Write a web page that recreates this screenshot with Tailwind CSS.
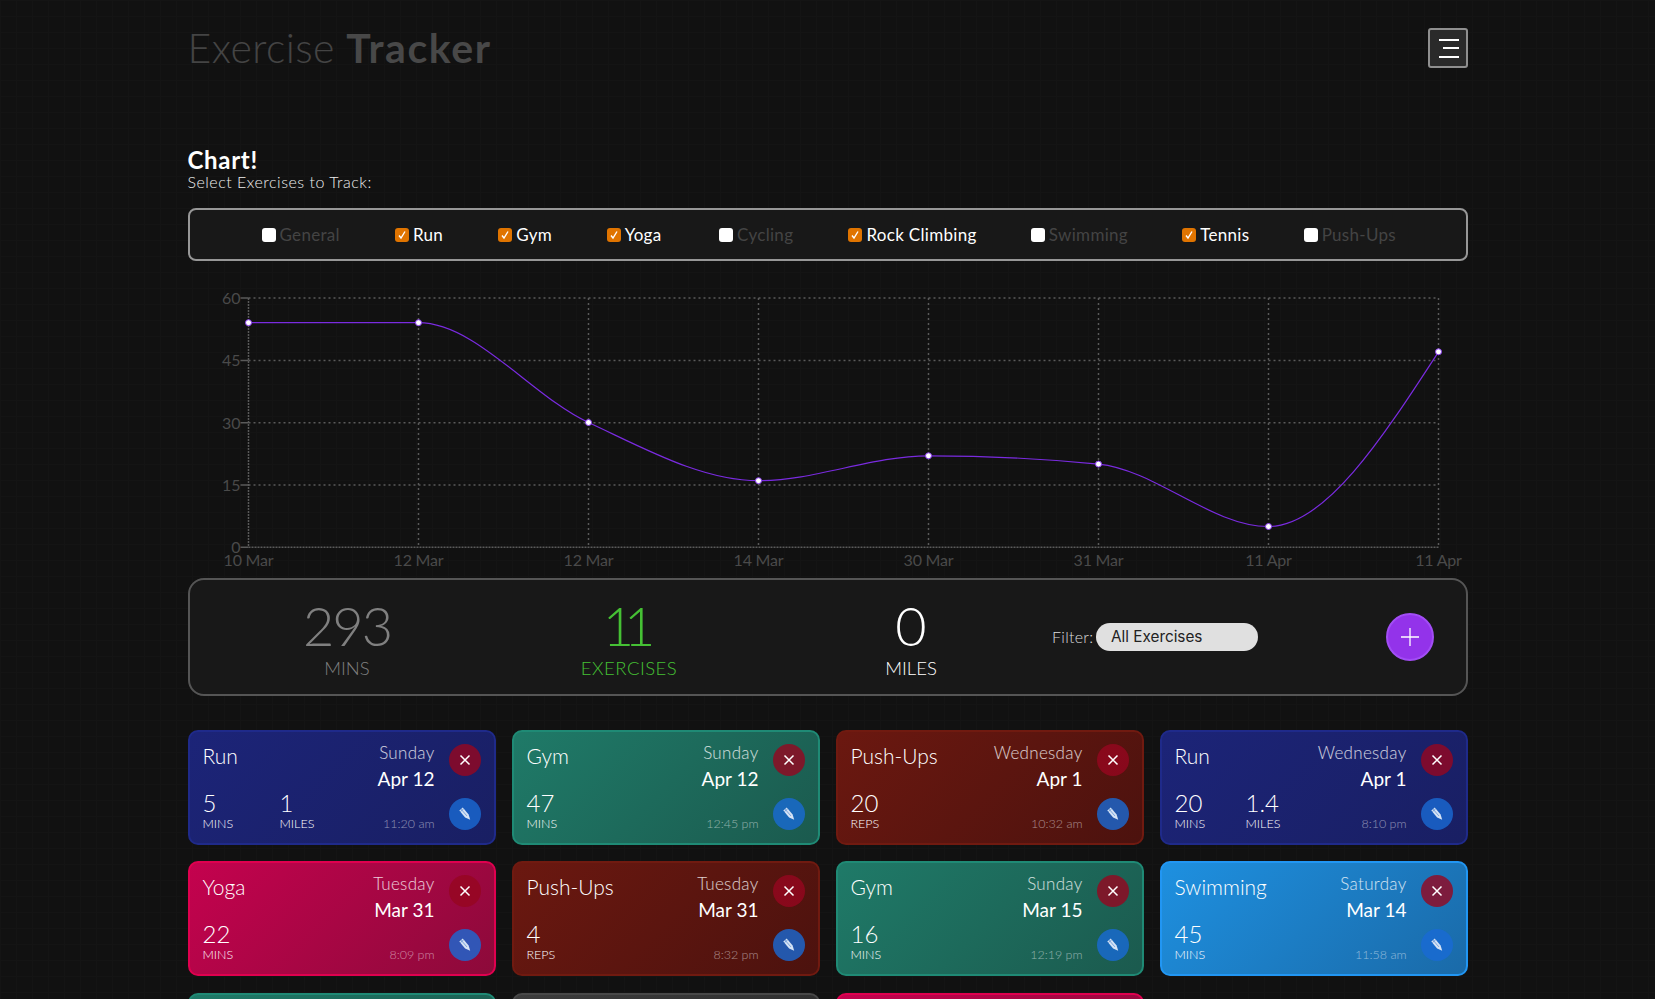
<!DOCTYPE html>
<html lang="en">
<head>
<meta charset="utf-8">
<title>Exercise Tracker</title>
<script src="https://cdn.jsdelivr.net/npm/@tailwindcss/browser@4"></script>
</head>
<body class="h-screen overflow-hidden bg-[#111111] bg-[linear-gradient(#141414_1px,transparent_1px),linear-gradient(90deg,#141414_1px,transparent_1px)] bg-[size:16px_16px] font-['Lato',sans-serif] text-white">
<div class="mx-auto w-[1280px]">

  <header class="flex h-[68px] items-end justify-between">
    <h1 class="text-[41px] leading-[40px] font-light tracking-[0.4px] text-[#444444]">Exercise <span class="font-bold tracking-[1.6px] text-[#484848]">Tracker</span></h1>
    <button class="flex h-10 w-10 flex-col items-end justify-center gap-[6.5px] rounded-[3px] border-2 border-[#8f8f8f] bg-[#2a2a2a] pr-[7px]">
      <span class="h-[2px] w-5 bg-white"></span>
      <span class="h-[2px] w-4 bg-white"></span>
      <span class="h-[2px] w-5 bg-white"></span>
    </button>
  </header>

  <h2 class="mt-[80px] text-[24px] leading-6 font-bold tracking-[0.7px]">Chart!</h2>
  <p class="text-[16px] leading-5 font-light tracking-[0.5px] text-[#eeeeee]">Select Exercises to Track:</p>

  <div class="mt-[16px] flex h-[53px] items-center gap-[56.4px] rounded-[8px] border-2 border-[#979797] bg-[#181818] pl-[72px] text-[17px] tracking-[0.3px] whitespace-nowrap">
    <label class="flex w-[77px] items-center gap-[4px] text-[#444444]"><span class="h-[14px] w-[14px] shrink-0 rounded-[3px] bg-white"></span>General</label>
    <label class="flex w-[47px] items-center gap-[4px]"><span class="flex h-[14px] w-[14px] shrink-0 items-center justify-center rounded-[3px] bg-[#e07400]"><svg width="10" height="10" viewBox="0 0 10 10" fill="none" stroke="#fff" stroke-width="1.4"><path d="M2 5.5 4 8 8 1.5"/></svg></span>Run</label>
    <label class="flex w-[52px] items-center gap-[4px]"><span class="flex h-[14px] w-[14px] shrink-0 items-center justify-center rounded-[3px] bg-[#e07400]"><svg width="10" height="10" viewBox="0 0 10 10" fill="none" stroke="#fff" stroke-width="1.4"><path d="M2 5.5 4 8 8 1.5"/></svg></span>Gym</label>
    <label class="flex w-[56px] items-center gap-[4px]"><span class="flex h-[14px] w-[14px] shrink-0 items-center justify-center rounded-[3px] bg-[#e07400]"><svg width="10" height="10" viewBox="0 0 10 10" fill="none" stroke="#fff" stroke-width="1.4"><path d="M2 5.5 4 8 8 1.5"/></svg></span>Yoga</label>
    <label class="flex w-[73px] items-center gap-[4px] text-[#444444]"><span class="h-[14px] w-[14px] shrink-0 rounded-[3px] bg-white"></span>Cycling</label>
    <label class="flex w-[126px] items-center gap-[4px]"><span class="flex h-[14px] w-[14px] shrink-0 items-center justify-center rounded-[3px] bg-[#e07400]"><svg width="10" height="10" viewBox="0 0 10 10" fill="none" stroke="#fff" stroke-width="1.4"><path d="M2 5.5 4 8 8 1.5"/></svg></span>Rock Climbing</label>
    <label class="flex w-[95px] items-center gap-[4px] text-[#444444]"><span class="h-[14px] w-[14px] shrink-0 rounded-[3px] bg-white"></span>Swimming</label>
    <label class="flex w-[65px] items-center gap-[4px]"><span class="flex h-[14px] w-[14px] shrink-0 items-center justify-center rounded-[3px] bg-[#e07400]"><svg width="10" height="10" viewBox="0 0 10 10" fill="none" stroke="#fff" stroke-width="1.4"><path d="M2 5.5 4 8 8 1.5"/></svg></span>Tennis</label>
    <label class="flex w-[88px] items-center gap-[4px] text-[#444444]"><span class="h-[14px] w-[14px] shrink-0 rounded-[3px] bg-white"></span>Push-Ups</label>
  </div>

  <svg class="block" width="1280" height="317" viewBox="187.5 261 1280 317">
    <g stroke="#5a5a5a" stroke-width="1.5" stroke-dasharray="2 3" fill="none">
      <path d="M248 298H1438M248 360.4H1438M248 422.7H1438M248 485H1438"/>
      <path d="M418 298V547M588 298V547M758 298V547M928 298V547M1098 298V547M1268 298V547M1438 298V547"/>
    </g>
    <g stroke="#5a5a5a" stroke-width="1.5" stroke-dasharray="2 1" fill="none">
      <path d="M248 298V547M248 547.3H1438"/>
      <path d="M240 298H248M240 360.4H248M240 422.7H248M240 485H248M240 547.3H248" stroke-dasharray="none"/>
    </g>
    <g fill="#4a4a4a" font-size="16" text-anchor="end" font-family="Lato, sans-serif">
      <text x="240" y="304">60</text>
      <text x="240" y="366">45</text>
      <text x="240" y="429">30</text>
      <text x="240" y="491">15</text>
      <text x="240" y="553">0</text>
    </g>
    <g fill="#4a4a4a" font-size="16" letter-spacing="-0.2" text-anchor="middle" font-family="Lato, sans-serif">
      <text x="248" y="566">10 Mar</text>
      <text x="418" y="566">12 Mar</text>
      <text x="588" y="566">12 Mar</text>
      <text x="758" y="566">14 Mar</text>
      <text x="928" y="566">30 Mar</text>
      <text x="1098" y="566">31 Mar</text>
      <text x="1268" y="566">11 Apr</text>
      <text x="1438" y="566">11 Apr</text>
    </g>
    <path fill="none" stroke="#7a2be0" stroke-width="1.2" d="M248 322.7C304.7 322.7 361.3 322.7 418 322.7C474.7 322.7 531.3 396.2 588 422.5C644.7 448.8 701.3 480.7 758 480.7C814.7 480.7 871.3 455.8 928 455.8C984.7 455.8 1041.3 458.6 1098 464.1C1154.7 469.6 1211.3 526.5 1268 526.5C1324.7 526.5 1381.3 439.1 1438 351.8"/>
    <g fill="#fff" stroke="#8a3cf0" stroke-width="1">
      <circle cx="248" cy="322.7" r="3"/>
      <circle cx="418" cy="322.7" r="3"/>
      <circle cx="588" cy="422.5" r="3"/>
      <circle cx="758" cy="480.7" r="3"/>
      <circle cx="928" cy="455.8" r="3"/>
      <circle cx="1098" cy="464.1" r="3"/>
      <circle cx="1268" cy="526.5" r="3"/>
      <circle cx="1438" cy="351.8" r="3"/>
    </g>
  </svg>

  <section class="flex h-[118px] items-center rounded-[16px] border-2 border-[#555555] bg-[#181818] pr-[32px] pl-[16.5px]">
    <div class="w-[282px] pt-[4px] text-center text-[#808080]">
      <div class="text-[54px] leading-[56px] font-light tracking-[-2px]">293</div>
      <div class="mt-[2px] text-[18.5px] leading-6 font-light">MINS</div>
    </div>
    <div class="w-[282px] pt-[4px] text-center text-[#45c034]">
      <div class="pr-[10px] text-[54px] leading-[56px] font-light tracking-[-10px]">11</div>
      <div class="mt-[2px] text-[18.5px] leading-6 font-light tracking-[0.5px]">EXERCISES</div>
    </div>
    <div class="w-[282px] pt-[4px] text-center text-white">
      <div class="text-[54px] leading-[56px] font-light">0</div>
      <div class="mt-[2px] text-[18.5px] leading-6 font-light">MILES</div>
    </div>
    <div class="flex items-center gap-[4px]">
      <span class="w-[40px] text-[16px] font-light tracking-[0.3px] whitespace-nowrap text-[#dddddd]">Filter:</span>
      <div class="flex h-[28px] w-[162px] items-center rounded-full bg-[#e0e0e0] pl-[15px] font-['Inter',sans-serif] text-[15.3px] text-[#222222]">All Exercises</div>
    </div>
    <button class="ml-auto flex h-12 w-12 items-center justify-center rounded-full border-2 border-[#a24df5] bg-[#9333ea]">
      <svg width="20" height="20" viewBox="0 0 20 20" stroke="#fff" stroke-width="1.3"><path d="M1 10H19M10 1V19"/></svg>
    </button>
  </section>

  <div class="mt-[33.5px] grid grid-cols-4 gap-x-4 gap-y-[16.5px]">

    <article class="flex h-[115px] rounded-[10px] border-2 border-[#1f2a8a] bg-[linear-gradient(135deg,#1c2478,#191f63)] pr-[13px] pl-[13px]">
      <div class="flex min-w-0 flex-1 flex-col pt-[11px]">
        <div class="flex justify-between">
          <h3 class="pt-[1px] text-[21px] leading-6 font-light">Run</h3>
          <div class="text-right"><div class="text-[17px] leading-5 font-light tracking-[0.3px] text-white/80">Sunday</div><div class="mt-[4px] text-[19px] leading-6">Apr 12</div></div>
        </div>
        <div class="flex items-end justify-between">
          <div class="flex">
            <div class="w-[77px]"><div class="text-[24px] leading-6 font-light">5</div><div class="mt-[1px] text-[12.5px] leading-4 font-light">MINS</div></div>
            <div><div class="text-[24px] leading-6 font-light">1</div><div class="mt-[1px] text-[12.5px] leading-4 font-light">MILES</div></div>
          </div>
          <div class="text-[12.5px] leading-4 font-light text-white/50">11:20 am</div>
        </div>
      </div>
      <div class="ml-[14px] flex w-8 flex-col gap-[22px] pt-[12px]">
        <button class="flex h-8 w-8 items-center justify-center rounded-full bg-[#96061f]/80"><svg width="12" height="12" viewBox="0 0 12 12" stroke="#fff" stroke-width="1.5"><path d="M1.5 1.5 10.5 10.5M10.5 1.5 1.5 10.5"/></svg></button>
        <button class="flex h-8 w-8 items-center justify-center rounded-full bg-[#196ad4]/80"><svg width="12" height="14" viewBox="0 0 12 14"><path fill="#d5e3f5" d="M.3 3.6 3.8.6 9.6 7.4 11.2 12.8 6.1 10.4Z"/><path fill="none" stroke="#3f78c8" stroke-width=".6" d="M2 2.1 7.9 8.9M1.3 4.7 4.8 1.7"/></svg></button>
      </div>
    </article>

    <article class="flex h-[115px] rounded-[10px] border-2 border-[#1f8a75] bg-[linear-gradient(135deg,#1f7a68,#1b5a4e)] pr-[13px] pl-[13px]">
      <div class="flex min-w-0 flex-1 flex-col pt-[11px]">
        <div class="flex justify-between">
          <h3 class="pt-[1px] text-[21px] leading-6 font-light">Gym</h3>
          <div class="text-right"><div class="text-[17px] leading-5 font-light tracking-[0.3px] text-white/80">Sunday</div><div class="mt-[4px] text-[19px] leading-6">Apr 12</div></div>
        </div>
        <div class="flex items-end justify-between">
          <div class="flex"><div><div class="text-[24px] leading-6 font-light">47</div><div class="mt-[1px] text-[12.5px] leading-4 font-light">MINS</div></div></div>
          <div class="text-[12.5px] leading-4 font-light text-white/50">12:45 pm</div>
        </div>
      </div>
      <div class="ml-[14px] flex w-8 flex-col gap-[22px] pt-[12px]">
        <button class="flex h-8 w-8 items-center justify-center rounded-full bg-[#96061f]/80"><svg width="12" height="12" viewBox="0 0 12 12" stroke="#fff" stroke-width="1.5"><path d="M1.5 1.5 10.5 10.5M10.5 1.5 1.5 10.5"/></svg></button>
        <button class="flex h-8 w-8 items-center justify-center rounded-full bg-[#196ad4]/80"><svg width="12" height="14" viewBox="0 0 12 14"><path fill="#d5e3f5" d="M.3 3.6 3.8.6 9.6 7.4 11.2 12.8 6.1 10.4Z"/><path fill="none" stroke="#3f78c8" stroke-width=".6" d="M2 2.1 7.9 8.9M1.3 4.7 4.8 1.7"/></svg></button>
      </div>
    </article>

    <article class="flex h-[115px] rounded-[10px] border-2 border-[#701a10] bg-[linear-gradient(135deg,#6b1810,#4c120e)] pr-[13px] pl-[13px]">
      <div class="flex min-w-0 flex-1 flex-col pt-[11px]">
        <div class="flex justify-between">
          <h3 class="pt-[1px] text-[21px] leading-6 font-light">Push-Ups</h3>
          <div class="text-right"><div class="text-[17px] leading-5 font-light tracking-[0.3px] text-white/80">Wednesday</div><div class="mt-[4px] text-[19px] leading-6">Apr 1</div></div>
        </div>
        <div class="flex items-end justify-between">
          <div class="flex"><div><div class="text-[24px] leading-6 font-light">20</div><div class="mt-[1px] text-[12.5px] leading-4 font-light">REPS</div></div></div>
          <div class="text-[12.5px] leading-4 font-light text-white/50">10:32 am</div>
        </div>
      </div>
      <div class="ml-[14px] flex w-8 flex-col gap-[22px] pt-[12px]">
        <button class="flex h-8 w-8 items-center justify-center rounded-full bg-[#96061f]/80"><svg width="12" height="12" viewBox="0 0 12 12" stroke="#fff" stroke-width="1.5"><path d="M1.5 1.5 10.5 10.5M10.5 1.5 1.5 10.5"/></svg></button>
        <button class="flex h-8 w-8 items-center justify-center rounded-full bg-[#196ad4]/80"><svg width="12" height="14" viewBox="0 0 12 14"><path fill="#d5e3f5" d="M.3 3.6 3.8.6 9.6 7.4 11.2 12.8 6.1 10.4Z"/><path fill="none" stroke="#3f78c8" stroke-width=".6" d="M2 2.1 7.9 8.9M1.3 4.7 4.8 1.7"/></svg></button>
      </div>
    </article>

    <article class="flex h-[115px] rounded-[10px] border-2 border-[#1f2a8a] bg-[linear-gradient(135deg,#1c2478,#191f63)] pr-[13px] pl-[13px]">
      <div class="flex min-w-0 flex-1 flex-col pt-[11px]">
        <div class="flex justify-between">
          <h3 class="pt-[1px] text-[21px] leading-6 font-light">Run</h3>
          <div class="text-right"><div class="text-[17px] leading-5 font-light tracking-[0.3px] text-white/80">Wednesday</div><div class="mt-[4px] text-[19px] leading-6">Apr 1</div></div>
        </div>
        <div class="flex items-end justify-between">
          <div class="flex">
            <div class="w-[71px]"><div class="text-[24px] leading-6 font-light">20</div><div class="mt-[1px] text-[12.5px] leading-4 font-light">MINS</div></div>
            <div><div class="text-[24px] leading-6 font-light">1.4</div><div class="mt-[1px] text-[12.5px] leading-4 font-light">MILES</div></div>
          </div>
          <div class="text-[12.5px] leading-4 font-light text-white/50">8:10 pm</div>
        </div>
      </div>
      <div class="ml-[14px] flex w-8 flex-col gap-[22px] pt-[12px]">
        <button class="flex h-8 w-8 items-center justify-center rounded-full bg-[#96061f]/80"><svg width="12" height="12" viewBox="0 0 12 12" stroke="#fff" stroke-width="1.5"><path d="M1.5 1.5 10.5 10.5M10.5 1.5 1.5 10.5"/></svg></button>
        <button class="flex h-8 w-8 items-center justify-center rounded-full bg-[#196ad4]/80"><svg width="12" height="14" viewBox="0 0 12 14"><path fill="#d5e3f5" d="M.3 3.6 3.8.6 9.6 7.4 11.2 12.8 6.1 10.4Z"/><path fill="none" stroke="#3f78c8" stroke-width=".6" d="M2 2.1 7.9 8.9M1.3 4.7 4.8 1.7"/></svg></button>
      </div>
    </article>

    <article class="flex h-[115px] rounded-[10px] border-2 border-[#e0004f] bg-[linear-gradient(135deg,#c4024e,#8c0a3a)] pr-[13px] pl-[13px]">
      <div class="flex min-w-0 flex-1 flex-col pt-[11px]">
        <div class="flex justify-between">
          <h3 class="pt-[1px] text-[21px] leading-6 font-light">Yoga</h3>
          <div class="text-right"><div class="text-[17px] leading-5 font-light tracking-[0.3px] text-white/80">Tuesday</div><div class="mt-[4px] text-[19px] leading-6">Mar 31</div></div>
        </div>
        <div class="flex items-end justify-between">
          <div class="flex"><div><div class="text-[24px] leading-6 font-light">22</div><div class="mt-[1px] text-[12.5px] leading-4 font-light">MINS</div></div></div>
          <div class="text-[12.5px] leading-4 font-light text-white/50">8:09 pm</div>
        </div>
      </div>
      <div class="ml-[14px] flex w-8 flex-col gap-[22px] pt-[12px]">
        <button class="flex h-8 w-8 items-center justify-center rounded-full bg-[#96061f]/80"><svg width="12" height="12" viewBox="0 0 12 12" stroke="#fff" stroke-width="1.5"><path d="M1.5 1.5 10.5 10.5M10.5 1.5 1.5 10.5"/></svg></button>
        <button class="flex h-8 w-8 items-center justify-center rounded-full bg-[#196ad4]/80"><svg width="12" height="14" viewBox="0 0 12 14"><path fill="#d5e3f5" d="M.3 3.6 3.8.6 9.6 7.4 11.2 12.8 6.1 10.4Z"/><path fill="none" stroke="#3f78c8" stroke-width=".6" d="M2 2.1 7.9 8.9M1.3 4.7 4.8 1.7"/></svg></button>
      </div>
    </article>

    <article class="flex h-[115px] rounded-[10px] border-2 border-[#701a10] bg-[linear-gradient(135deg,#6b1810,#4c120e)] pr-[13px] pl-[13px]">
      <div class="flex min-w-0 flex-1 flex-col pt-[11px]">
        <div class="flex justify-between">
          <h3 class="pt-[1px] text-[21px] leading-6 font-light">Push-Ups</h3>
          <div class="text-right"><div class="text-[17px] leading-5 font-light tracking-[0.3px] text-white/80">Tuesday</div><div class="mt-[4px] text-[19px] leading-6">Mar 31</div></div>
        </div>
        <div class="flex items-end justify-between">
          <div class="flex"><div><div class="text-[24px] leading-6 font-light">4</div><div class="mt-[1px] text-[12.5px] leading-4 font-light">REPS</div></div></div>
          <div class="text-[12.5px] leading-4 font-light text-white/50">8:32 pm</div>
        </div>
      </div>
      <div class="ml-[14px] flex w-8 flex-col gap-[22px] pt-[12px]">
        <button class="flex h-8 w-8 items-center justify-center rounded-full bg-[#96061f]/80"><svg width="12" height="12" viewBox="0 0 12 12" stroke="#fff" stroke-width="1.5"><path d="M1.5 1.5 10.5 10.5M10.5 1.5 1.5 10.5"/></svg></button>
        <button class="flex h-8 w-8 items-center justify-center rounded-full bg-[#196ad4]/80"><svg width="12" height="14" viewBox="0 0 12 14"><path fill="#d5e3f5" d="M.3 3.6 3.8.6 9.6 7.4 11.2 12.8 6.1 10.4Z"/><path fill="none" stroke="#3f78c8" stroke-width=".6" d="M2 2.1 7.9 8.9M1.3 4.7 4.8 1.7"/></svg></button>
      </div>
    </article>

    <article class="flex h-[115px] rounded-[10px] border-2 border-[#1f8a75] bg-[linear-gradient(135deg,#1f7a68,#1b5a4e)] pr-[13px] pl-[13px]">
      <div class="flex min-w-0 flex-1 flex-col pt-[11px]">
        <div class="flex justify-between">
          <h3 class="pt-[1px] text-[21px] leading-6 font-light">Gym</h3>
          <div class="text-right"><div class="text-[17px] leading-5 font-light tracking-[0.3px] text-white/80">Sunday</div><div class="mt-[4px] text-[19px] leading-6">Mar 15</div></div>
        </div>
        <div class="flex items-end justify-between">
          <div class="flex"><div><div class="text-[24px] leading-6 font-light">16</div><div class="mt-[1px] text-[12.5px] leading-4 font-light">MINS</div></div></div>
          <div class="text-[12.5px] leading-4 font-light text-white/50">12:19 pm</div>
        </div>
      </div>
      <div class="ml-[14px] flex w-8 flex-col gap-[22px] pt-[12px]">
        <button class="flex h-8 w-8 items-center justify-center rounded-full bg-[#96061f]/80"><svg width="12" height="12" viewBox="0 0 12 12" stroke="#fff" stroke-width="1.5"><path d="M1.5 1.5 10.5 10.5M10.5 1.5 1.5 10.5"/></svg></button>
        <button class="flex h-8 w-8 items-center justify-center rounded-full bg-[#196ad4]/80"><svg width="12" height="14" viewBox="0 0 12 14"><path fill="#d5e3f5" d="M.3 3.6 3.8.6 9.6 7.4 11.2 12.8 6.1 10.4Z"/><path fill="none" stroke="#3f78c8" stroke-width=".6" d="M2 2.1 7.9 8.9M1.3 4.7 4.8 1.7"/></svg></button>
      </div>
    </article>

    <article class="flex h-[115px] rounded-[10px] border-2 border-[#2196f3] bg-[linear-gradient(135deg,#1e90e0,#1a6aa8)] pr-[13px] pl-[13px]">
      <div class="flex min-w-0 flex-1 flex-col pt-[11px]">
        <div class="flex justify-between">
          <h3 class="pt-[1px] text-[21px] leading-6 font-light">Swimming</h3>
          <div class="text-right"><div class="text-[17px] leading-5 font-light tracking-[0.3px] text-white/80">Saturday</div><div class="mt-[4px] text-[19px] leading-6">Mar 14</div></div>
        </div>
        <div class="flex items-end justify-between">
          <div class="flex"><div><div class="text-[24px] leading-6 font-light">45</div><div class="mt-[1px] text-[12.5px] leading-4 font-light">MINS</div></div></div>
          <div class="text-[12.5px] leading-4 font-light text-white/50">11:58 am</div>
        </div>
      </div>
      <div class="ml-[14px] flex w-8 flex-col gap-[22px] pt-[12px]">
        <button class="flex h-8 w-8 items-center justify-center rounded-full bg-[#96061f]/80"><svg width="12" height="12" viewBox="0 0 12 12" stroke="#fff" stroke-width="1.5"><path d="M1.5 1.5 10.5 10.5M10.5 1.5 1.5 10.5"/></svg></button>
        <button class="flex h-8 w-8 items-center justify-center rounded-full bg-[#196ad4]/80"><svg width="12" height="14" viewBox="0 0 12 14"><path fill="#d5e3f5" d="M.3 3.6 3.8.6 9.6 7.4 11.2 12.8 6.1 10.4Z"/><path fill="none" stroke="#3f78c8" stroke-width=".6" d="M2 2.1 7.9 8.9M1.3 4.7 4.8 1.7"/></svg></button>
      </div>
    </article>

    <article class="h-[115px] rounded-[10px] border-2 border-[#1f8a75] bg-[linear-gradient(135deg,#1f7a68,#1b5a4e)]"></article>
    <article class="h-[115px] rounded-[10px] border-2 border-[#484848] bg-[linear-gradient(135deg,#3c3c3c,#2c2c2c)]"></article>
    <article class="h-[115px] rounded-[10px] border-2 border-[#e0004f] bg-[linear-gradient(135deg,#c4024e,#8c0a3a)]"></article>
  </div>
</div>
</body>
</html>
